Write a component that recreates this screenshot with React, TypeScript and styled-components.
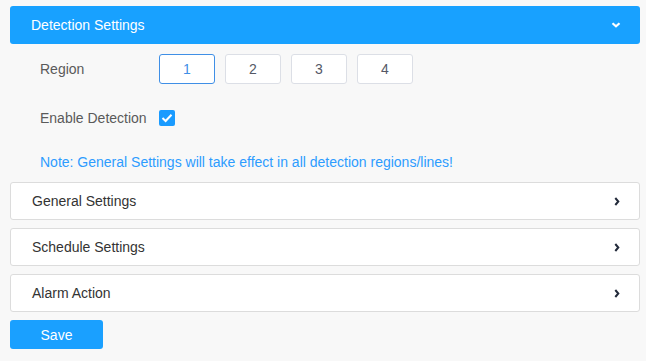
import React, { useState } from 'react';
import styled, { createGlobalStyle } from 'styled-components';

const GlobalStyle = createGlobalStyle`
  body {
    margin: 0;
    background-color: #f8f8f8;
    font-family: 'Liberation Sans', Arial, sans-serif;
  }
`;

const REGIONS = ['1', '2', '3', '4'];
const SECTIONS = ['General Settings', 'Schedule Settings', 'Alarm Action'];

const ChevronDown = () => (
  <svg width="10" height="6" viewBox="0 0 10 6">
    <path d="M1.5 1.2 L5 4.3 L8.5 1.2" fill="none" stroke="#ffffff" strokeWidth="2.2" />
  </svg>
);

const ChevronRight = () => (
  <svg width="6" height="9" viewBox="0 0 6 9">
    <path d="M1.3 1 L4.3 4.5 L1.3 8" fill="none" stroke="#222a3a" strokeWidth="2" />
  </svg>
);

const CheckMark = () => (
  <svg width="12" height="10" viewBox="0 0 12 10">
    <path d="M1.5 5 L4.6 8 L10.5 1.8" fill="none" stroke="#ffffff" strokeWidth="2" />
  </svg>
);

const App: React.FC = () => {
  const [region, setRegion] = useState('1');
  const [enabled, setEnabled] = useState(true);

  return (
    <>
      <GlobalStyle />
      <Page>
        <Header>
          <HeaderTitle>Detection Settings</HeaderTitle>
          <ChevronDown />
        </Header>
        <Body>
          <Row>
            <Label>Region</Label>
            <RegionList>
              {REGIONS.map((item) => (
                <RegionButton
                  key={item}
                  isActive={item === region}
                  onClick={() => setRegion(item)}
                >
                  {item}
                </RegionButton>
              ))}
            </RegionList>
          </Row>
          <Row>
            <Label>Enable Detection</Label>
            <Checkbox checked={enabled} onClick={() => setEnabled(!enabled)}>
              {enabled && <CheckMark />}
            </Checkbox>
          </Row>
          <Note>Note: General Settings will take effect in all detection regions/lines!</Note>
        </Body>
        <Sections>
          {SECTIONS.map((title) => (
            <Section key={title}>
              <SectionTitle>{title}</SectionTitle>
              <ChevronRight />
            </Section>
          ))}
        </Sections>
        <SaveButton>Save</SaveButton>
      </Page>
    </>
  );
};

const Page = styled.div`
  width: 630px;
  padding: 6px 6px 12px 10px;
  display: flex;
  flex-direction: column;
`;

const Header = styled.div`
  height: 38px;
  border-radius: 3px;
  background-color: #18a1ff;
  display: flex;
  align-items: center;
  justify-content: space-between;
  padding: 0 19px 0 21px;
`;

const HeaderTitle = styled.div`
  font-size: 14px;
  color: #ffffff;
`;

const Body = styled.div`
  padding: 10px 0 0 30px;
  display: flex;
  flex-direction: column;
`;

const Row = styled.div`
  display: flex;
  align-items: center;
  height: 30px;
  margin-bottom: 19px;
`;

const Label = styled.div`
  width: 119px;
  font-size: 14px;
  color: #5a5a5a;
`;

const RegionList = styled.div`
  display: flex;
  gap: 10px;
`;

const RegionButton = styled.button<{ isActive: boolean }>`
  width: 56px;
  height: 30px;
  border-radius: 3px;
  background-color: #ffffff;
  font-family: 'Liberation Sans', Arial, sans-serif;
  font-size: 14px;
  cursor: pointer;
  padding: 0;
  border: solid 1px ${({ isActive }) => (isActive ? '#3f8fe6' : '#dcdfe6')};
  color: ${({ isActive }) => (isActive ? '#3f8fe6' : '#555866')};
`;

const Checkbox = styled.div<{ checked: boolean }>`
  width: 16px;
  height: 16px;
  border-radius: 2px;
  display: flex;
  align-items: center;
  justify-content: center;
  cursor: pointer;
  background-color: ${({ checked }) => (checked ? '#1a9bff' : '#ffffff')};
  border: ${({ checked }) => (checked ? 'none' : 'solid 1px #dcdfe6')};
`;

const Note = styled.div`
  font-size: 14px;
  color: #2d9cff;
  margin-top: 2px;
  height: 16px;
`;

const Sections = styled.div`
  margin-top: 12px;
  display: flex;
  flex-direction: column;
  gap: 8px;
`;

const Section = styled.div`
  height: 36px;
  border: solid 1px #dcdcdc;
  border-radius: 3px;
  background-color: #ffffff;
  display: flex;
  align-items: center;
  justify-content: space-between;
  padding: 0 19px 0 21px;
`;

const SectionTitle = styled.div`
  font-size: 14px;
  color: #333333;
`;

const SaveButton = styled.button`
  margin-top: 8px;
  width: 93px;
  height: 29px;
  border: none;
  border-radius: 3px;
  background-color: #1aa0ff;
  color: #ffffff;
  font-family: 'Liberation Sans', Arial, sans-serif;
  font-size: 14px;
  cursor: pointer;
`;

export default App;
